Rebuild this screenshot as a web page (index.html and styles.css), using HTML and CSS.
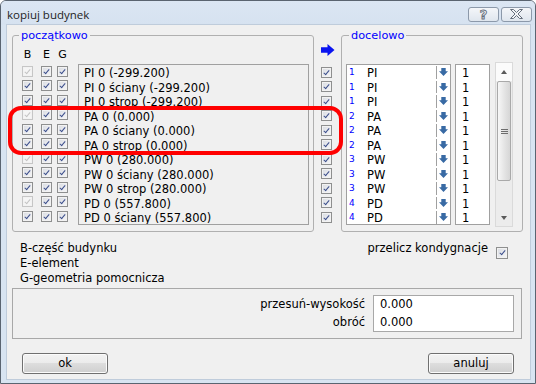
FILE: index.html
```html
<!DOCTYPE html>
<html lang="pl">
<head>
<meta charset="UTF-8">
<meta name="viewport" content="width=device-width, initial-scale=1.0">
<title>kopiuj budynek</title>
<link rel="stylesheet" href="styles.css">
</head>
<body>
<div class="window">
    <div class="titlebar">
        <span class="title">kopiuj budynek</span>
        <div class="title-buttons">
            <span class="tb-btn tb-help">?</span>
            <span class="tb-btn tb-close">
                <svg width="13" height="10" viewBox="0 0 13 10"><path d="M0.5 0.5h3l3 3 3-3h3l-4.5 4.5 4.5 4.5h-3l-3-3-3 3h-3l4.5-4.5z" fill="#f3f5f8" stroke="#66707d" stroke-width="1"/></svg>
            </span>
        </div>
    </div>

    <div class="client">
        <div class="groups">
            <!-- source levels -->
            <div class="group group-source">
                <div class="group-label">początkowo</div>
                <div class="beg-head"><span class="col">B</span><span class="col">E</span><span class="col">G</span></div>
                <div class="source-body">
                    <div class="check-rows">
                        <div class="check-row"><span class="cb off"></span><span class="cb"></span><span class="cb"></span></div>
                        <div class="check-row"><span class="cb"></span><span class="cb"></span><span class="cb"></span></div>
                        <div class="check-row"><span class="cb"></span><span class="cb"></span><span class="cb"></span></div>
                        <div class="check-row"><span class="cb off"></span><span class="cb"></span><span class="cb"></span></div>
                        <div class="check-row"><span class="cb"></span><span class="cb"></span><span class="cb"></span></div>
                        <div class="check-row"><span class="cb"></span><span class="cb"></span><span class="cb"></span></div>
                        <div class="check-row"><span class="cb off"></span><span class="cb"></span><span class="cb"></span></div>
                        <div class="check-row"><span class="cb"></span><span class="cb"></span><span class="cb"></span></div>
                        <div class="check-row"><span class="cb"></span><span class="cb"></span><span class="cb"></span></div>
                        <div class="check-row"><span class="cb off"></span><span class="cb"></span><span class="cb"></span></div>
                        <div class="check-row"><span class="cb"></span><span class="cb"></span><span class="cb"></span></div>
                    </div>
                    <div class="listbox">
                        <div class="list-row">PI 0 (-299.200)</div>
                        <div class="list-row">PI 0 ściany (-299.200)</div>
                        <div class="list-row">PI 0 strop (-299.200)</div>
                        <div class="list-row">PA 0 (0.000)</div>
                        <div class="list-row">PA 0 ściany (0.000)</div>
                        <div class="list-row">PA 0 strop (0.000)</div>
                        <div class="list-row">PW 0 (280.000)</div>
                        <div class="list-row">PW 0 ściany (280.000)</div>
                        <div class="list-row">PW 0 strop (280.000)</div>
                        <div class="list-row">PD 0 (557.800)</div>
                        <div class="list-row">PD 0 ściany (557.800)</div>
                    </div>
                </div>
            </div>

            <div class="mid">
                <svg class="arrow-right" width="14" height="12" viewBox="0 0 14 12"><path d="M0 3.3h6.5V0L13.5 6 6.5 12V8.7H0z" fill="#0a14f0"/></svg>
                <div class="check-rows">
                    <div class="check-row"><span class="cb"></span></div>
                    <div class="check-row"><span class="cb"></span></div>
                    <div class="check-row"><span class="cb"></span></div>
                    <div class="check-row"><span class="cb"></span></div>
                    <div class="check-row"><span class="cb"></span></div>
                    <div class="check-row"><span class="cb"></span></div>
                    <div class="check-row"><span class="cb"></span></div>
                    <div class="check-row"><span class="cb"></span></div>
                    <div class="check-row"><span class="cb"></span></div>
                    <div class="check-row"><span class="cb"></span></div>
                    <div class="check-row"><span class="cb"></span></div>
                </div>
            </div>

            <!-- target levels -->
            <div class="group group-target">
                <div class="group-label">docelowo</div>
                <div class="target-body">
                    <div class="combo-list">
                        <div class="combo-row"><span class="level">1</span><span class="name">PI</span><span class="drop"><svg width="9" height="8" viewBox="0 0 9 8"><path d="M2.3 0h4.4v3.3H9L4.5 8 0 3.3h2.3z" fill="#386aa4"/></svg></span></div>
                        <div class="combo-row"><span class="level">1</span><span class="name">PI</span><span class="drop"><svg width="9" height="8" viewBox="0 0 9 8"><path d="M2.3 0h4.4v3.3H9L4.5 8 0 3.3h2.3z" fill="#386aa4"/></svg></span></div>
                        <div class="combo-row"><span class="level">1</span><span class="name">PI</span><span class="drop"><svg width="9" height="8" viewBox="0 0 9 8"><path d="M2.3 0h4.4v3.3H9L4.5 8 0 3.3h2.3z" fill="#386aa4"/></svg></span></div>
                        <div class="combo-row"><span class="level">2</span><span class="name">PA</span><span class="drop"><svg width="9" height="8" viewBox="0 0 9 8"><path d="M2.3 0h4.4v3.3H9L4.5 8 0 3.3h2.3z" fill="#386aa4"/></svg></span></div>
                        <div class="combo-row"><span class="level">2</span><span class="name">PA</span><span class="drop"><svg width="9" height="8" viewBox="0 0 9 8"><path d="M2.3 0h4.4v3.3H9L4.5 8 0 3.3h2.3z" fill="#386aa4"/></svg></span></div>
                        <div class="combo-row"><span class="level">2</span><span class="name">PA</span><span class="drop"><svg width="9" height="8" viewBox="0 0 9 8"><path d="M2.3 0h4.4v3.3H9L4.5 8 0 3.3h2.3z" fill="#386aa4"/></svg></span></div>
                        <div class="combo-row"><span class="level">3</span><span class="name">PW</span><span class="drop"><svg width="9" height="8" viewBox="0 0 9 8"><path d="M2.3 0h4.4v3.3H9L4.5 8 0 3.3h2.3z" fill="#386aa4"/></svg></span></div>
                        <div class="combo-row"><span class="level">3</span><span class="name">PW</span><span class="drop"><svg width="9" height="8" viewBox="0 0 9 8"><path d="M2.3 0h4.4v3.3H9L4.5 8 0 3.3h2.3z" fill="#386aa4"/></svg></span></div>
                        <div class="combo-row"><span class="level">3</span><span class="name">PW</span><span class="drop"><svg width="9" height="8" viewBox="0 0 9 8"><path d="M2.3 0h4.4v3.3H9L4.5 8 0 3.3h2.3z" fill="#386aa4"/></svg></span></div>
                        <div class="combo-row"><span class="level">4</span><span class="name">PD</span><span class="drop"><svg width="9" height="8" viewBox="0 0 9 8"><path d="M2.3 0h4.4v3.3H9L4.5 8 0 3.3h2.3z" fill="#386aa4"/></svg></span></div>
                        <div class="combo-row"><span class="level">4</span><span class="name">PD</span><span class="drop"><svg width="9" height="8" viewBox="0 0 9 8"><path d="M2.3 0h4.4v3.3H9L4.5 8 0 3.3h2.3z" fill="#386aa4"/></svg></span></div>
                    </div>
                    <div class="count-list">
                        <div class="count-row">1</div>
                        <div class="count-row">1</div>
                        <div class="count-row">1</div>
                        <div class="count-row">1</div>
                        <div class="count-row">1</div>
                        <div class="count-row">1</div>
                        <div class="count-row">1</div>
                        <div class="count-row">1</div>
                        <div class="count-row">1</div>
                        <div class="count-row">1</div>
                        <div class="count-row">1</div>
                    </div>
                    <div class="scrollbar">
                        <div class="sb-btn"><span class="tri tri-up"></span></div>
                        <div class="sb-thumb"><span class="grip"></span></div>
                        <div class="sb-track"></div>
                        <div class="sb-btn"><span class="tri tri-down"></span></div>
                    </div>
                </div>
            </div>
        </div>

        <div class="legend-row">
            <div class="legend">
                <div>B-część budynku</div>
                <div>E-element</div>
                <div>G-geometria pomocnicza</div>
            </div>
            <div class="recalc">przelicz kondygnacje <span class="cb cb-big"></span></div>
        </div>

        <div class="offset-panel">
            <div class="offset-labels">
                <div>przesuń-wysokość</div>
                <div>obróć</div>
            </div>
            <div class="offset-values">
                <div>0.000</div>
                <div>0.000</div>
            </div>
        </div>

        <div class="buttons">
            <span class="btn">ok</span>
            <span class="btn">anuluj</span>
        </div>
    </div>

    <div class="highlight"></div>
</div>
</body>
</html>
```

FILE: styles.css
```css
body {
    margin: 0;
    background: #ffffff;
    font-family: "DejaVu Sans", sans-serif;
    font-size: 11.5px;
    color: #000;
}

.window {
    position: relative;
    width: 536px;
    height: 384px;
    box-sizing: border-box;
    border: 1px solid #5a6470;
    border-radius: 6px 6px 0 0;
    background: #d8e4f1;
    padding-bottom: 4px;
    display: flex;
    flex-direction: column;
}

/* title bar */
.titlebar {
    height: 24px;
    display: flex;
    align-items: center;
    justify-content: space-between;
    padding: 0 3px 0 6px;
    background: linear-gradient(#dbe6f3, #d6e2f0);
    border-radius: 5px 5px 0 0;
}

.title {
    font-family: "Open Sans", sans-serif;
    font-size: 11.5px;
    color: #1e1e1e;
    margin-top: 2px;
}

.title-buttons {
    display: flex;
    margin-top: 2px;
}

.tb-btn {
    width: 31px;
    height: 15px;
    box-sizing: border-box;
    border: 1px solid #8c99aa;
    border-radius: 3px;
    background: linear-gradient(#f4f6f9, #dfe6ee);
    display: flex;
    align-items: center;
    justify-content: center;
}

.tb-help {
    margin-right: 2px;
    font-weight: bold;
    font-size: 13px;
    line-height: 13px;
    color: #f3f5f8;
    -webkit-text-stroke: 0.9px #66707d;
}

/* client area */
.client {
    flex: 1;
    margin: 0 5px 0 6px;
    background: #f0f0f0;
    box-shadow: 0 0 0 1px #bfccdb;
}

.groups {
    display: flex;
    height: 197px;
    margin-top: 10px;
    padding-left: 5px;
}

.group {
    box-sizing: border-box;
    height: 197px;
    border: 1px solid #b0b0b0;
    border-radius: 3px;
}

.group-source {
    width: 302px;
}

.group-target {
    width: 182px;
}

.group-label {
    width: fit-content;
    margin: -7px 0 0 6px;
    padding: 0 2px;
    background: #f0f0f0;
    color: #0000ff;
    font-size: 11.3px;
    line-height: 13px;
}

.group-target .group-label {
    margin-left: 7px;
}

.beg-head {
    display: flex;
    height: 13px;
    line-height: 13px;
    margin-top: 6px;
    padding-left: 9px;
    font-size: 11px;
}

.beg-head .col {
    width: 11px;
    text-align: center;
}

.beg-head .col:nth-child(2),
.group-source .check-row .cb:nth-child(2) {
    margin-left: 8px;
}

.beg-head .col:nth-child(3),
.group-source .check-row .cb:nth-child(3) {
    margin-left: 5px;
}

.source-body {
    display: flex;
    margin-top: 3px;
    padding-left: 9px;
}

.check-row {
    height: 14.5px;
    display: flex;
    align-items: center;
}

/* checkbox */
.cb {
    position: relative;
    display: inline-block;
    width: 11px;
    height: 11px;
    box-sizing: border-box;
    border: 1px solid #8e8f8f;
    background: linear-gradient(135deg, #d9dce2, #f6f6f7);
    box-shadow: inset 0 0 0 1px #f2f2f2;
}

.cb::after {
    content: "";
    position: absolute;
    left: 3px;
    top: 1px;
    width: 2px;
    height: 5px;
    border: solid #3c4f8c;
    border-width: 0 1.5px 1.5px 0;
    transform: rotate(40deg);
}

.cb.off {
    border-color: #c6c6c6;
    background: #f5f5f5;
}

.cb.off::after {
    border-color: #c4c4c4;
}

.cb-big {
    width: 12px;
    height: 12px;
    margin: 6px 0 0 8px;
}

.cb-big::after {
    left: 3.5px;
}

.listbox {
    width: 231px;
    height: 161px;
    box-sizing: border-box;
    margin-left: 10px;
    padding: 1px 0 0 5px;
    border: 1px solid #a0a0a0;
    overflow: hidden;
}

.list-row {
    height: 14.5px;
    line-height: 14.5px;
    white-space: nowrap;
}

/* middle column */
.mid {
    width: 27px;
    box-sizing: border-box;
    padding-left: 7px;
}

.arrow-right {
    display: block;
    margin-top: 9px;
}

.mid .check-rows {
    margin-top: 9px;
}

/* target */
.target-body {
    display: flex;
    margin-top: 22px;
    padding-left: 4px;
}

.combo-list,
.count-list {
    height: 161px;
    box-sizing: border-box;
    border: 1px solid #a0a0a0;
    background: #fff;
    overflow: hidden;
}

.combo-list {
    width: 105px;
}

.combo-row {
    display: flex;
    align-items: center;
    height: 14.5px;
}

.level {
    align-self: flex-start;
    width: 18px;
    padding-left: 2px;
    margin-top: 2px;
    font-size: 9px;
    line-height: 10px;
    color: #0000ff;
}

.name {
    flex: 1;
    padding-top: 2px;
}

.drop {
    width: 14px;
    height: 12.5px;
    box-sizing: border-box;
    border-left: 1px solid #a0a0a0;
    display: flex;
    align-items: center;
    justify-content: center;
}

.count-list {
    width: 35px;
    margin-left: 4px;
    padding: 1px 0 0 6px;
}

.count-row {
    height: 14.5px;
    line-height: 14.5px;
}

.scrollbar {
    width: 18px;
    height: 165px;
    box-sizing: border-box;
    margin: -2px 0 0 5px;
    border: 1px solid #dadada;
    background: #ececec;
    display: flex;
    flex-direction: column;
}

.sb-btn {
    height: 18px;
    background: #fbfbfb;
    display: flex;
    align-items: center;
    justify-content: center;
}

.sb-btn:last-child {
    height: 17px;
    background: #ececec;
}

.tri {
    width: 0;
    height: 0;
    border-left: 3.5px solid transparent;
    border-right: 3.5px solid transparent;
}

.tri-up {
    border-bottom: 4px solid #5a5a5a;
}

.tri-down {
    border-top: 4px solid #5a5a5a;
}

.sb-thumb {
    height: 100px;
    margin: 0 1px;
    box-sizing: border-box;
    border: 1px solid #a9a9a9;
    border-radius: 2px;
    background: linear-gradient(90deg, #f7f7f7, #e2e2e2 60%, #d6d6d6);
    display: flex;
    align-items: center;
    justify-content: center;
}

.grip {
    width: 7px;
    height: 5px;
    background: repeating-linear-gradient(#6d6d6d 0 1px, transparent 1px 2px);
}

.sb-track {
    flex: 1;
}

/* bottom part */
.legend-row {
    display: flex;
    justify-content: space-between;
    margin-top: 8.5px;
    padding: 0 22px 0 13px;
    line-height: 15px;
}

.recalc {
    display: flex;
    align-items: flex-start;
}

.offset-panel {
    display: flex;
    justify-content: flex-end;
    margin: 2.5px 8px 0 5px;
    padding: 6px 7px 6px 0;
    border: 1px solid #a8a8a8;
}

.offset-labels {
    text-align: right;
    margin-right: 8px;
    padding-top: 1px;
    line-height: 17.5px;
}

.offset-values {
    width: 141px;
    box-sizing: border-box;
    padding: 0 6px;
    border: 1px solid #a8a8a8;
    background: #fff;
    line-height: 17.5px;
}

.buttons {
    display: flex;
    justify-content: space-between;
    margin-top: 13.5px;
    padding: 0 16px 0 15px;
}

.btn {
    width: 86px;
    height: 21px;
    box-sizing: border-box;
    border: 1px solid #707070;
    border-radius: 3px;
    background: linear-gradient(#f2f2f2 0%, #ebebeb 50%, #dddddd 50%, #cfcfcf 100%);
    box-shadow: inset 0 0 0 1px #fbfbfb;
    display: flex;
    align-items: center;
    justify-content: center;
}

/* red marker drawn over the dialog */
.highlight {
    position: absolute;
    left: 7px;
    top: 105px;
    width: 335px;
    height: 49px;
    box-sizing: border-box;
    border: 4px solid #ff0000;
    border-radius: 13px;
}
```
